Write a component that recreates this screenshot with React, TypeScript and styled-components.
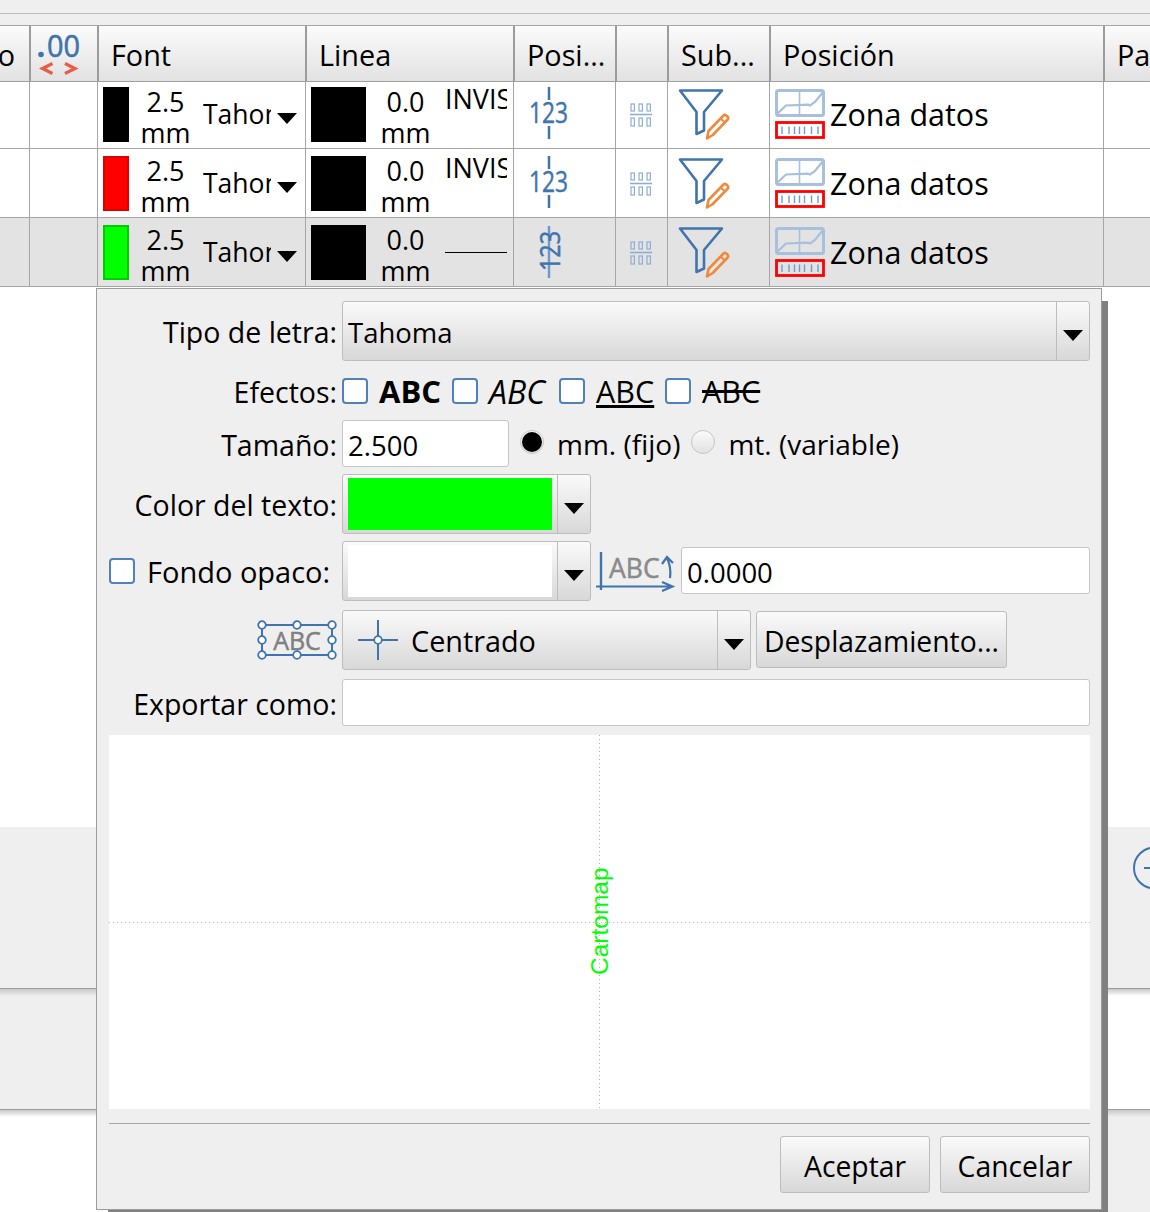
import React from 'react'
import styled, { createGlobalStyle } from 'styled-components'

const BLUE = '#3f74ad'
const PALE = '#a6c0de'
const ORANGE = '#ee8a3c'
const SANS = '"Open Sans", "Noto Sans", "Liberation Sans", sans-serif'

const GlobalStyle = createGlobalStyle`
  html, body {
    margin: 0;
    padding: 0;
    background: #fff;
  }
  body {
    font-family: ${SANS};
    font-size: 27px;
    color: #000;
  }
`

const Page = styled.div`
  position: relative;
  width: 1150px;
  height: 1212px;
  overflow: hidden;
  background: #fff;
`

const TopStrip = styled.div`
  height: 13px;
  background: #efefef;
  border-bottom: 1px solid #bdbdbd;
`

const TopGap = styled.div`
  height: 11px;
  background: #efefef;
`

const COLUMNS = '30px 68px 208px 208px 102px 52px 102px 334px 46px'

const HeaderRow = styled.div`
  display: grid;
  grid-template-columns: ${COLUMNS};
  height: 57px;
  box-sizing: border-box;
  border-top: 1px solid #a6a6a6;
  border-bottom: 1px solid #a0a0a0;
  background: linear-gradient(#fbfbfb, #e2e2e2);
`

const HeaderCell = styled.div`
  display: flex;
  align-items: center;
  overflow: hidden;
  white-space: nowrap;
  box-sizing: border-box;
  font-size: 28.8px;
  border-left: 1px solid #9c9c9c;
  border-right: 1px solid #9c9c9c;
  padding: 1px 0 0 12px;
  &:first-child {
    border-left: none;
  }
  &:last-child {
    border-right: none;
  }
`

const ClippedHeaderCell = styled(HeaderCell)`
  justify-content: flex-end;
  padding: 1px 14px 0 0;
`

const IconHeaderCell = styled(HeaderCell)`
  padding: 0 0 0 7px;
`

const TableRow = styled.div<{ $selected?: boolean; $first?: boolean }>`
  display: grid;
  grid-template-columns: ${COLUMNS};
  height: ${(p) => (p.$first ? 67 : 69)}px;
  box-sizing: border-box;
  border-bottom: 1px solid #a6a6a6;
  background: ${(p) => (p.$selected ? '#e3e3e3' : '#fff')};
  --cell-top: ${(p) => (p.$first ? 0 : 2)}px;
`

const Cell = styled.div`
  display: flex;
  align-items: center;
  overflow: hidden;
  box-sizing: border-box;
  padding-top: var(--cell-top);
  border-right: 1px solid #a6a6a6;
  &:last-child {
    border-right: none;
  }
`

const FontCell = styled(Cell)`
  padding-left: 5px;
`

const IconCell = styled(Cell)<{ $left: number }>`
  padding-left: ${(p) => p.$left}px;
`

const PositionCell = styled(Cell)`
  padding-left: 5px;
  gap: 5px;
  font-size: 30.5px;
  white-space: nowrap;
`

const ZoneLabel = styled.span`
  margin-bottom: 2px;
`

const Swatch = styled.div<{ $color: string; $edge: string; $width: number }>`
  width: ${(p) => p.$width}px;
  height: 55px;
  margin-bottom: 1px;
  flex: none;
  box-sizing: border-box;
  background: ${(p) => p.$color};
  border: 2px solid ${(p) => p.$edge};
`

const SizeText = styled.div<{ $width: number }>`
  width: ${(p) => p.$width}px;
  flex: none;
  margin-top: 4px;
  text-align: center;
  line-height: 31px;
`

const FontName = styled.div`
  width: 68px;
  margin-left: 1px;
  margin-bottom: 2px;
  flex: none;
  overflow: hidden;
  white-space: nowrap;
  font-size: 26.5px;
`

const Arrow = styled.div`
  width: 0;
  height: 0;
  flex: none;
  border-left: 10.5px solid transparent;
  border-right: 10.5px solid transparent;
  border-top: 11px solid #000;
`

const RowArrow = styled(Arrow)`
  margin-left: 6px;
  margin-top: 6px;
`

const LineStyle = styled.div`
  width: 62px;
  height: 55px;
  flex: none;
  overflow: hidden;
  white-space: nowrap;
  line-height: 22px;
`

const LineSample = styled.div`
  height: 26px;
  border-bottom: 1px solid #000;
`

const Band = styled.div<{ $height: number }>`
  display: flex;
  height: ${(p) => p.$height}px;
  box-sizing: border-box;
`

const BandSide = styled.div<{ $gray?: boolean; $shaded?: boolean; $ruled?: boolean }>`
  flex: 1;
  box-sizing: border-box;
  background-color: ${(p) => (p.$gray ? '#efefef' : '#fff')};
  background-image: ${(p) => (p.$shaded ? 'linear-gradient(#c8c8c8, rgba(200, 200, 200, 0) 7px)' : 'none')};
  border-bottom: ${(p) => (p.$ruled ? '1px solid #9c9c9c' : 'none')};
`

const ZoomSide = styled(BandSide)`
  display: flex;
  justify-content: flex-end;
  padding-top: 19px;
  overflow: hidden;
`

const ZoomHolder = styled.div`
  margin-right: -25px;
`

const Dialog = styled.div`
  position: absolute;
  left: 96px;
  top: 288px;
  width: 1006px;
  height: 922px;
  box-sizing: border-box;
  padding: 12px 11px 0 12px;
  background: #efefef;
  border: 1px solid #9c9c9c;
  box-shadow: 9px 10px 0 -3px #808080;
`

const FormRow = styled.div<{ $height: number; $gap: number }>`
  display: grid;
  grid-template-columns: 228px 1fr;
  grid-template-rows: ${(p) => p.$height}px;
  column-gap: 5px;
  align-items: center;
  height: ${(p) => p.$height}px;
  margin-top: ${(p) => p.$gap}px;
`

const Label = styled.div`
  text-align: right;
  white-space: nowrap;
  font-size: 28.5px;
  padding-top: 2px;
`

const CheckLabel = styled.label`
  display: flex;
  align-items: center;
  gap: 12px;
  white-space: nowrap;
  font-size: 29px;
`

const IconLabel = styled.div`
  display: flex;
  justify-content: flex-end;
`

const Controls = styled.div<{ $gap?: number }>`
  display: flex;
  align-items: center;
  gap: ${(p) => p.$gap ?? 0}px;
`

const Combo = styled.div<{ $width?: number }>`
  display: flex;
  height: 60px;
  box-sizing: border-box;
  flex: ${(p) => (p.$width ? 'none' : '1')};
  width: ${(p) => (p.$width ? `${p.$width}px` : 'auto')};
  border: 1px solid #bdbdbd;
  border-radius: 3px;
  background: linear-gradient(#fafafa, #d8d8d8);
`

const ComboValue = styled.div<{ $gap?: number }>`
  flex: 1;
  display: flex;
  align-items: center;
  gap: ${(p) => p.$gap ?? 0}px;
  min-width: 0;
  padding: 3px 5px 3px 5px;
  box-sizing: border-box;
  font-size: 28.8px;
`

const ValueText = styled.span`
  font-size: 27.5px;
  padding-top: 2px;
`

const ComboArrow = styled.div`
  flex: none;
  width: 32px;
  padding-top: 8px;
  box-sizing: content-box;
  display: flex;
  align-items: center;
  justify-content: center;
  border-left: 1px solid #bdbdbd;
`

const ColorFill = styled.div<{ $color: string }>`
  flex: 1;
  align-self: stretch;
  background: ${(p) => p.$color};
`

const CenterSlot = styled.div`
  display: flex;
  margin-left: 10px;
`

const EffectGrid = styled.div`
  display: grid;
  grid-template-columns: 110px 107px 106px auto;
  justify-content: start;
`

const Effect = styled.label`
  display: flex;
  align-items: center;
  gap: 11px;
  height: 28px;
`

const CheckBox = styled.span`
  display: block;
  width: 26px;
  height: 26px;
  flex: none;
  box-sizing: border-box;
  border: 2px solid #5181b8;
  border-radius: 4px;
  background: #fff;
`

const EFFECT_SIZES = { bold: 31, italic: 32, underline: 30.5, strike: 30.5 }

const EffectText = styled.span<{ $kind: 'bold' | 'italic' | 'underline' | 'strike' }>`
  font-size: ${(p) => EFFECT_SIZES[p.$kind]}px;
  font-weight: ${(p) => (p.$kind === 'bold' ? 700 : 400)};
  font-style: ${(p) => (p.$kind === 'italic' ? 'italic' : 'normal')};
  text-decoration: ${(p) =>
    p.$kind === 'underline' ? 'underline' : p.$kind === 'strike' ? 'line-through' : 'none'};
`

const TextField = styled.div<{ $width?: number }>`
  height: 47px;
  line-height: 47px;
  box-sizing: border-box;
  flex: ${(p) => (p.$width ? 'none' : '1')};
  width: ${(p) => (p.$width ? `${p.$width}px` : 'auto')};
  padding: 1px 0 0 5px;
  font-size: 27.5px;
  background: #fff;
  border: 1px solid #c6c6c6;
  border-radius: 3px;
`

const AngleField = styled(TextField)`
  align-self: flex-start;
  margin-top: 6px;
`

const Radio = styled.span<{ $on?: boolean }>`
  display: flex;
  align-items: center;
  justify-content: center;
  width: 24px;
  height: 24px;
  flex: none;
  box-sizing: border-box;
  border: 1px solid #c6c6c6;
  border-radius: 50%;
  background: linear-gradient(#fafafa, #e2e2e2);
  margin-top: -3px;
  &::after {
    content: '';
    display: ${(p) => (p.$on ? 'block' : 'none')};
    width: 20px;
    height: 20px;
    border-radius: 50%;
    background: #000;
  }
`

const RadioOption = styled.label`
  display: flex;
  align-items: center;
  gap: 13px;
  white-space: nowrap;
  font-size: 28px;
`

const PushButton = styled.button<{ $width: number; $height: number }>`
  width: ${(p) => p.$width}px;
  height: ${(p) => p.$height}px;
  padding: 2px 0 0;
  flex: none;
  font: inherit;
  font-size: 28.3px;
  color: #000;
  white-space: nowrap;
  border: 1px solid #bdbdbd;
  border-radius: 3px;
  background: linear-gradient(#fafafa, #d8d8d8);
`

const OffsetButton = styled(PushButton)`
  align-self: flex-start;
  margin-top: 1px;
`

const Preview = styled.div`
  height: 374px;
  margin-top: 9px;
  background: #fff;
`

const Separator = styled.div`
  height: 1px;
  margin-top: 14px;
  background: #a6a6a6;
`

const ButtonBar = styled.div`
  display: flex;
  justify-content: flex-end;
  gap: 10px;
  margin-top: 12px;
`

const DecimalsIcon = () => (
  <svg width="44" height="50" viewBox="0 0 44 50">
    <circle cx="3" cy="25.5" r="2.8" fill={BLUE} />
    <text
      x="9"
      y="28"
      fontFamily={SANS}
      fontSize="31"
      fill={BLUE}
      stroke={BLUE}
      strokeWidth="0.6"
      textLength="33"
      lengthAdjust="spacingAndGlyphs"
    >
      00
    </text>
    <path d="M14.5 34.5l-10 5 10 5M27 34.5l10 5-10 5" fill="none" stroke="#e85d4a" strokeWidth="3.2" />
  </svg>
)

const NumbersIcon = ({ rotated }: { rotated?: boolean }) =>
  rotated ? (
    <svg width="44" height="56" viewBox="0 0 44 56">
      <path d="M22 1v52" stroke="#6f9bcc" strokeWidth="2.5" />
      <text
        transform="rotate(-90 33 46)"
        x="33"
        y="46"
        fontFamily={SANS}
        fontSize="28"
        fill={BLUE}
        stroke={BLUE}
        strokeWidth="0.5"
        textLength="40"
        lengthAdjust="spacingAndGlyphs"
      >
        123
      </text>
    </svg>
  ) : (
    <svg width="44" height="56" viewBox="0 0 44 56">
      <path d="M22 0v13M22 39v13" stroke={BLUE} strokeWidth="2.5" />
      <text
        x="2"
        y="36"
        fontFamily={SANS}
        fontSize="30"
        fill={BLUE}
        stroke={BLUE}
        strokeWidth="0.5"
        textLength="39"
        lengthAdjust="spacingAndGlyphs"
      >
        123
      </text>
    </svg>
  )

const PlacementIcon = () => (
  <svg width="24" height="24" viewBox="0 0 24 24" fill="none" stroke="#8eaed2">
    <path d="M1 11.5h22" strokeWidth="1.6" />
    {[2, 10, 18].map((x) => (
      <React.Fragment key={x}>
        <rect x={x} y="1" width="3.4" height="7" strokeWidth="1.2" />
        <rect x={x} y="15" width="3.4" height="8" strokeWidth="1.2" />
      </React.Fragment>
    ))}
  </svg>
)

const FilterIcon = () => (
  <svg width="52" height="54" viewBox="0 0 52 54" fill="none">
    <path d="M2 2.5h42L26 24v18.5l-7.5 3.500V24z" stroke={BLUE} strokeWidth="2.6" strokeLinejoin="round" />
    <path
      d="M29 50.5l1.500-7.500 15-15.500c1.800-1.800 6 2 4.200 4L34.800 47z"
      stroke={ORANGE}
      strokeWidth="2.6"
      strokeLinejoin="round"
    />
    <path d="M42.5 30.5l4.500 4" stroke={ORANGE} strokeWidth="2" />
  </svg>
)

const PlacementMapIcon = () => (
  <svg width="50" height="52" viewBox="0 0 50 52" fill="none">
    <rect x="1.5" y="1.5" width="47" height="25" rx="2" stroke={PALE} strokeWidth="3" />
    <path d="M24.5 2v24" stroke={PALE} strokeWidth="1.6" />
    <path d="M2 25l9-8.500 22-.8 2 .8 5-3.500 8-10" stroke={PALE} strokeWidth="2.2" />
    <rect x="1.5" y="33.5" width="47" height="15" stroke="#f00" strokeWidth="2.8" />
    {[7, 14, 19.5, 24.5, 29.5, 36.5, 43].map((x) => (
      <path key={x} d={`M${x} 37.5v7.5`} stroke="#6f9bcc" strokeWidth="1.4" />
    ))}
  </svg>
)

const ZoomOutIcon = () => (
  <svg width="42" height="44" viewBox="0 0 42 44" fill="none" stroke={BLUE}>
    <circle cx="21.5" cy="22" r="20.5" strokeWidth="2" />
    <path d="M11 22h20" strokeWidth="2" />
  </svg>
)

const RotationIcon = () => (
  <svg width="80" height="42" viewBox="0 0 80 42" fill="none">
    <text x="13" y="28" fontFamily={SANS} fontSize="26.5" fill="#8a8a8a" stroke="#8a8a8a" strokeWidth="0.5">
      ABC
    </text>
    <path d="M5 2v38" stroke={BLUE} strokeWidth="2.4" />
    <path d="M0 36.5h76M66 32l10.500 4.500L66 41" stroke={BLUE} strokeWidth="2.2" />
    <path d="M74 28c1-8 0-14-3-20M66 14l5-7 6 6" stroke={BLUE} strokeWidth="2.2" />
  </svg>
)

const AnchorBoxIcon = () => {
  const handles = [
    [5, 5],
    [40, 5],
    [75, 5],
    [5, 20],
    [75, 20],
    [5, 35],
    [40, 35],
    [75, 35],
  ]
  return (
    <svg width="80" height="40" viewBox="0 0 80 40" fill="none">
      <text x="40" y="30" textAnchor="middle" fontFamily={SANS} fontSize="25" fill="#808080" stroke="#808080" strokeWidth="0.5">
        ABC
      </text>
      <rect x="5" y="5" width="70" height="30" stroke={BLUE} strokeWidth="2" />
      {handles.map(([x, y]) => (
        <circle key={`${x}-${y}`} cx={x} cy={y} r="3.8" fill="#fff" stroke={BLUE} strokeWidth="1.8" />
      ))}
    </svg>
  )
}

const CrossIcon = () => (
  <svg width="40" height="40" viewBox="0 0 40 40" fill="none" stroke={BLUE}>
    <path d="M0 20h16M24 20h16M20 0v16M20 24v16" strokeWidth="2" />
    <circle cx="20" cy="20" r="3.8" fill="#fff" strokeWidth="1.8" />
  </svg>
)

const PreviewDrawing = () => (
  <svg width="981" height="374" viewBox="0 0 981 374">
    <path d="M490.5 0v374M0 187.5h981" stroke="#b4b4b4" strokeWidth="1" strokeDasharray="1 3" />
    <text
      transform="rotate(-90 499 240)"
      x="499"
      y="240"
      fontFamily='"Liberation Sans", Arial, sans-serif'
      fontSize="24.5"
      fill="#00ff00"
    >
      Cartomap
    </text>
  </svg>
)

const rows = [
  { color: '#000', edge: '#000', line: 'INVISIBLE', first: true },
  { color: '#f00', edge: '#e00000', line: 'INVISIBLE' },
  { color: '#0f0', edge: '#00cc00', line: '', selected: true, rotated: true },
]

const App = () => (
  <Page>
    <GlobalStyle />
    <TopStrip />
    <TopGap />
    <HeaderRow>
      <ClippedHeaderCell>o</ClippedHeaderCell>
      <IconHeaderCell>
        <DecimalsIcon />
      </IconHeaderCell>
      <HeaderCell>Font</HeaderCell>
      <HeaderCell>Linea</HeaderCell>
      <HeaderCell>Posi...</HeaderCell>
      <HeaderCell />
      <HeaderCell>Sub...</HeaderCell>
      <HeaderCell>Posición</HeaderCell>
      <HeaderCell>Pa</HeaderCell>
    </HeaderRow>
    {rows.map((row, i) => (
      <TableRow key={i} $first={row.first} $selected={row.selected}>
        <Cell />
        <Cell />
        <FontCell>
          <Swatch $color={row.color} $edge={row.edge} $width={26} />
          <SizeText $width={73}>
            2.5
            <br />
            mm
          </SizeText>
          <FontName>Tahoma</FontName>
          <RowArrow />
        </FontCell>
        <FontCell>
          <Swatch $color="#000" $edge="#000" $width={55} />
          <SizeText $width={79}>
            0.0
            <br />
            mm
          </SizeText>
          <LineStyle>{row.line || <LineSample />}</LineStyle>
        </FontCell>
        <IconCell $left={13}>
          <NumbersIcon rotated={row.rotated} />
        </IconCell>
        <IconCell $left={13}>
          <PlacementIcon />
        </IconCell>
        <IconCell $left={10}>
          <FilterIcon />
        </IconCell>
        <PositionCell>
          <PlacementMapIcon />
          <ZoneLabel>Zona datos</ZoneLabel>
        </PositionCell>
        <Cell />
      </TableRow>
    ))}
    <Band $height={540} />
    <Band $height={162}>
      <BandSide $gray $ruled />
      <ZoomSide $gray $ruled>
        <ZoomHolder>
          <ZoomOutIcon />
        </ZoomHolder>
      </ZoomSide>
    </Band>
    <Band $height={121}>
      <BandSide $gray $shaded $ruled />
      <BandSide $shaded $ruled />
    </Band>
    <Band $height={103}>
      <BandSide $shaded />
      <BandSide $gray $shaded />
    </Band>

    <Dialog>
      <FormRow $height={60} $gap={0}>
        <Label>Tipo de letra:</Label>
        <Combo>
          <ComboValue>
            <ValueText>Tahoma</ValueText>
          </ComboValue>
          <ComboArrow>
            <Arrow />
          </ComboArrow>
        </Combo>
      </FormRow>
      <FormRow $height={28} $gap={16}>
        <Label>Efectos:</Label>
        <EffectGrid>
          <Effect>
            <CheckBox />
            <EffectText $kind="bold">ABC</EffectText>
          </Effect>
          <Effect>
            <CheckBox />
            <EffectText $kind="italic">ABC</EffectText>
          </Effect>
          <Effect>
            <CheckBox />
            <EffectText $kind="underline">ABC</EffectText>
          </Effect>
          <Effect>
            <CheckBox />
            <EffectText $kind="strike">ABC</EffectText>
          </Effect>
        </EffectGrid>
      </FormRow>
      <FormRow $height={47} $gap={15}>
        <Label>Tamaño:</Label>
        <Controls $gap={11}>
          <TextField $width={167}>2.500</TextField>
          <RadioOption>
            <Radio $on />
            mm. (fijo)
          </RadioOption>
          <RadioOption>
            <Radio />
            mt. (variable)
          </RadioOption>
        </Controls>
      </FormRow>
      <FormRow $height={60} $gap={7}>
        <Label>Color del texto:</Label>
        <Controls>
          <Combo $width={249}>
            <ComboValue>
              <ColorFill $color="#00ff00" />
            </ComboValue>
            <ComboArrow>
              <Arrow />
            </ComboArrow>
          </Combo>
        </Controls>
      </FormRow>
      <FormRow $height={60} $gap={7}>
        <CheckLabel>
          <CheckBox />
          Fondo opaco:
        </CheckLabel>
        <Controls $gap={5}>
          <Combo $width={249}>
            <ComboValue>
              <ColorFill $color="#fff" />
            </ComboValue>
            <ComboArrow>
              <Arrow />
            </ComboArrow>
          </Combo>
          <RotationIcon />
          <AngleField>0.0000</AngleField>
        </Controls>
      </FormRow>
      <FormRow $height={60} $gap={9}>
        <IconLabel>
          <AnchorBoxIcon />
        </IconLabel>
        <Controls $gap={5}>
          <Combo $width={409}>
            <ComboValue $gap={13}>
              <CenterSlot>
                <CrossIcon />
              </CenterSlot>
              Centrado
            </ComboValue>
            <ComboArrow>
              <Arrow />
            </ComboArrow>
          </Combo>
          <OffsetButton $width={251} $height={57}>
            Desplazamiento...
          </OffsetButton>
        </Controls>
      </FormRow>
      <FormRow $height={47} $gap={9}>
        <Label>Exportar como:</Label>
        <TextField />
      </FormRow>
      <Preview>
        <PreviewDrawing />
      </Preview>
      <Separator />
      <ButtonBar>
        <PushButton $width={150} $height={57}>
          Aceptar
        </PushButton>
        <PushButton $width={150} $height={57}>
          Cancelar
        </PushButton>
      </ButtonBar>
    </Dialog>
  </Page>
)

export default App
